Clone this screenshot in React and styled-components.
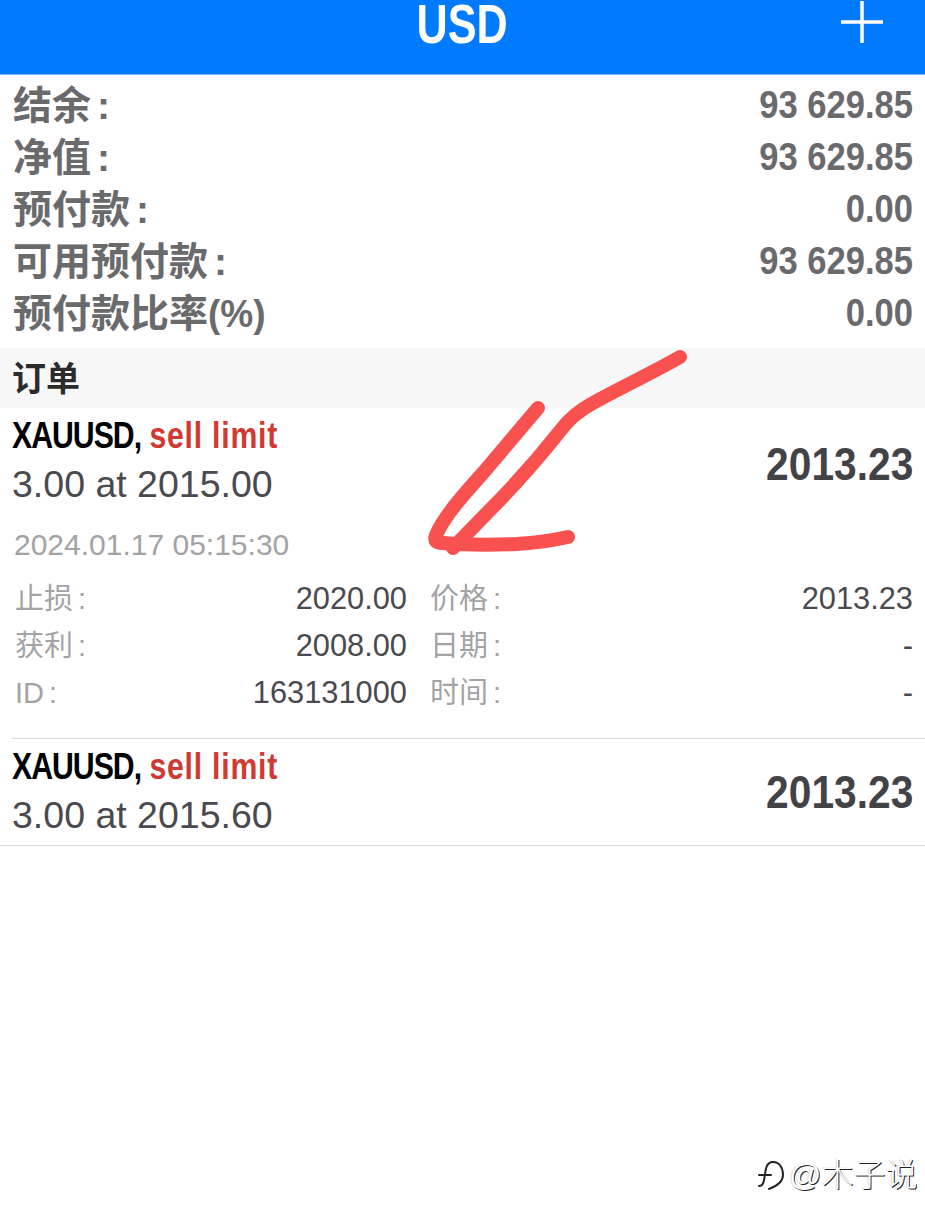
import React from "react"
import styled, { createGlobalStyle } from "styled-components"

const FONT = `"Liberation Sans", "Noto Sans CJK SC", sans-serif`

const GlobalStyle = createGlobalStyle`
  html, body {
    margin: 0;
    padding: 0;
    background: #fff;
    font-family: ${FONT};
  }
`

const Page = styled.div`
  position: relative;
  width: 925px;
  height: 1230px;
  overflow: hidden;
  background: #fff;
`

const Header = styled.header`
  height: 75px;
  box-sizing: border-box;
  display: flex;
  align-items: flex-start;
  justify-content: center;
  background: #007aff;
  border-bottom: 1px solid #7dbcff;
`

const Title = styled.div`
  padding-top: 1px;
  font-size: 55px;
  line-height: 46px;
  font-weight: 700;
  color: #fff;
  transform: scaleX(0.785);
`

const AddIcon = styled.svg`
  position: absolute;
  top: 1px;
  right: 42px;
  width: 42px;
  height: 42px;
`

const Summary = styled.section`
  height: 273px;
  box-sizing: border-box;
  padding: 4px 12px 0 13px;
  display: flex;
  flex-direction: column;
`

const SummaryRow = styled.div`
  height: 52px;
  display: flex;
  align-items: center;
  justify-content: space-between;
  color: #6a6a6d;
  font-weight: 700;
`

const SummaryLabel = styled.span`
  font-size: 39px;
  line-height: 46px;
  margin-top: 2px;
  white-space: nowrap;
`

const SummaryValue = styled.span`
  display: inline-block;
  font-size: 38px;
  line-height: 46px;
  white-space: nowrap;
  transform: scaleX(0.91);
  transform-origin: right center;
`

const Colon = styled.span`
  margin-left: ${props => props.$gap}px;
`

const Percent = styled.span`
  display: inline-block;
  transform: scaleX(0.95);
  transform-origin: left center;
`

const SectionBand = styled.div`
  height: 60px;
  box-sizing: border-box;
  padding: 0 0 4px 12px;
  display: flex;
  align-items: center;
  background: #f7f7f7;
  color: #2b2b2d;
  font-size: 34px;
  font-weight: 600;
`

const Order = styled.article`
  padding-left: 12px;
`

const OrderTop = styled.div`
  height: ${props => props.$height}px;
  display: flex;
  align-items: center;
  justify-content: space-between;
  padding-right: 12px;
`

const OrderText = styled.div`
  align-self: flex-start;
`

const OrderTitle = styled.div`
  height: 42px;
  margin-top: 7px;
  font-size: 36px;
  line-height: 42px;
  font-weight: 700;
  color: #000;
  white-space: nowrap;
  transform: scaleX(0.84);
  transform-origin: left center;
`

const Symbol = styled.span`
  letter-spacing: -1.2px;
`

const Side = styled.span`
  color: #cf3a33;
  letter-spacing: 0.9px;
`

const OrderSub = styled.div`
  margin-top: 6px;
  font-size: 37.5px;
  line-height: 42px;
  color: #4a4a4e;
`

const Price = styled.div`
  font-size: 46px;
  font-weight: 700;
  color: #434347;
  transform: scaleX(0.885);
  transform-origin: right center;
`

const Stamp = styled.div`
  height: 32px;
  margin: 10px 0 0 2px;
  font-size: 30px;
  line-height: 32px;
  color: #a3a3a6;
`

const Details = styled.div`
  display: grid;
  grid-template-columns: 392px 483px;
  column-gap: 23px;
  margin: 14px 0 0 3px;
  padding-bottom: 22px;
`

const DetailRow = styled.div`
  height: 47px;
  display: flex;
  align-items: center;
  justify-content: space-between;
  color: #4a4a4e;
`

const DetailLabel = styled.span`
  font-size: 29px;
  line-height: 36px;
  color: #a3a3a6;
`

const DetailValue = styled.span`
  font-size: 30.8px;
  line-height: 36px;
`

const Divider = styled.div`
  height: 1px;
  background: #d9d9db;
  margin-left: ${props => props.$inset || 0}px;
`

const Scribble = styled.svg`
  position: absolute;
  top: 340px;
  left: 420px;
  width: 280px;
  height: 225px;
`

const Watermark = styled.div`
  position: absolute;
  top: 1155px;
  left: 757px;
  display: flex;
  align-items: center;
  gap: 4px;
  font-size: 32px;
  line-height: 40px;
  font-weight: 300;
  color: #fff;
  text-shadow: 1px 1px 0 #222, -1px 0 0 #ddd;
`

const orders = [
  { price: "2015.00", expanded: true },
  { price: "2015.60", expanded: false },
]

const summary = [
  { label: "结余", value: "93 629.85" },
  { label: "净值", value: "93 629.85" },
  { label: "预付款", value: "0.00" },
  { label: "可用预付款", value: "93 629.85" },
  { label: "预付款比率", percent: true, value: "0.00" },
]

const details = [
  ["止损", "2020.00", "价格", "2013.23"],
  ["获利", "2008.00", "日期", "-"],
  ["ID", "163131000", "时间", "-"],
]

const App = () => {
  return (
    <Page>
      <GlobalStyle />
      <Header>
        <Title>USD</Title>
        <AddIcon viewBox="0 0 42 42">
          <path d="M21 0V42M0 21H42" stroke="#fff" strokeWidth="3.5" fill="none" />
        </AddIcon>
      </Header>
      <Summary>
        {summary.map(row => (
          <SummaryRow key={row.label}>
            <SummaryLabel>
              {row.label}
              {row.percent ? <Percent>(%)</Percent> : <Colon $gap={6}>:</Colon>}
            </SummaryLabel>
            <SummaryValue>{row.value}</SummaryValue>
          </SummaryRow>
        ))}
      </Summary>
      <SectionBand>订单</SectionBand>
      {orders.map((order, idx) => (
        <React.Fragment key={idx}>
          <Order>
            <OrderTop $height={order.expanded ? 111 : 106}>
              <OrderText>
                <OrderTitle>
                  <Symbol>XAUUSD,</Symbol> <Side>sell limit</Side>
                </OrderTitle>
                <OrderSub>3.00 at {order.price}</OrderSub>
              </OrderText>
              <Price>2013.23</Price>
            </OrderTop>
            {order.expanded && (
              <>
                <Stamp>2024.01.17 05:15:30</Stamp>
                <Details>
                  {details.map(([l1, v1, l2, v2]) => (
                    <React.Fragment key={l1}>
                      <DetailRow>
                        <DetailLabel>{l1}<Colon $gap={5}>:</Colon></DetailLabel>
                        <DetailValue>{v1}</DetailValue>
                      </DetailRow>
                      <DetailRow>
                        <DetailLabel>{l2}<Colon $gap={5}>:</Colon></DetailLabel>
                        <DetailValue>{v2}</DetailValue>
                      </DetailRow>
                    </React.Fragment>
                  ))}
                </Details>
              </>
            )}
          </Order>
          <Divider $inset={order.expanded ? 12 : 0} />
        </React.Fragment>
      ))}
      <Scribble viewBox="420 340 280 225">
        <path
          d="M680 357C650 374 620 388 593 403C578 411 568 420 560 431C545 450 525 475 487 513L453 548"
          stroke="#f95050"
          strokeWidth="14"
          strokeLinecap="round"
          strokeLinejoin="round"
          fill="none"
        />
        <path
          d="M538 408L483 473C465 493 445 515 436 535C434 541 436 543 443 543C465 545 490 545 517 544C532 543 550 541 568 537"
          stroke="#f95050"
          strokeWidth="14"
          strokeLinecap="round"
          strokeLinejoin="round"
          fill="none"
        />
      </Scribble>
      <Watermark>
        <svg width="28" height="38" viewBox="0 0 28 38" fill="none">
          <path d="M2 30C7 30 7 24 8 18C9 11 10 7 15 6M2 19H14M16 6C22 6 26 11 26 19C26 26 20 30 12 33" stroke="#222" strokeWidth="2" strokeLinecap="round" />
        </svg>
        <span>@木子说</span>
      </Watermark>
    </Page>
  )
}

export default App
